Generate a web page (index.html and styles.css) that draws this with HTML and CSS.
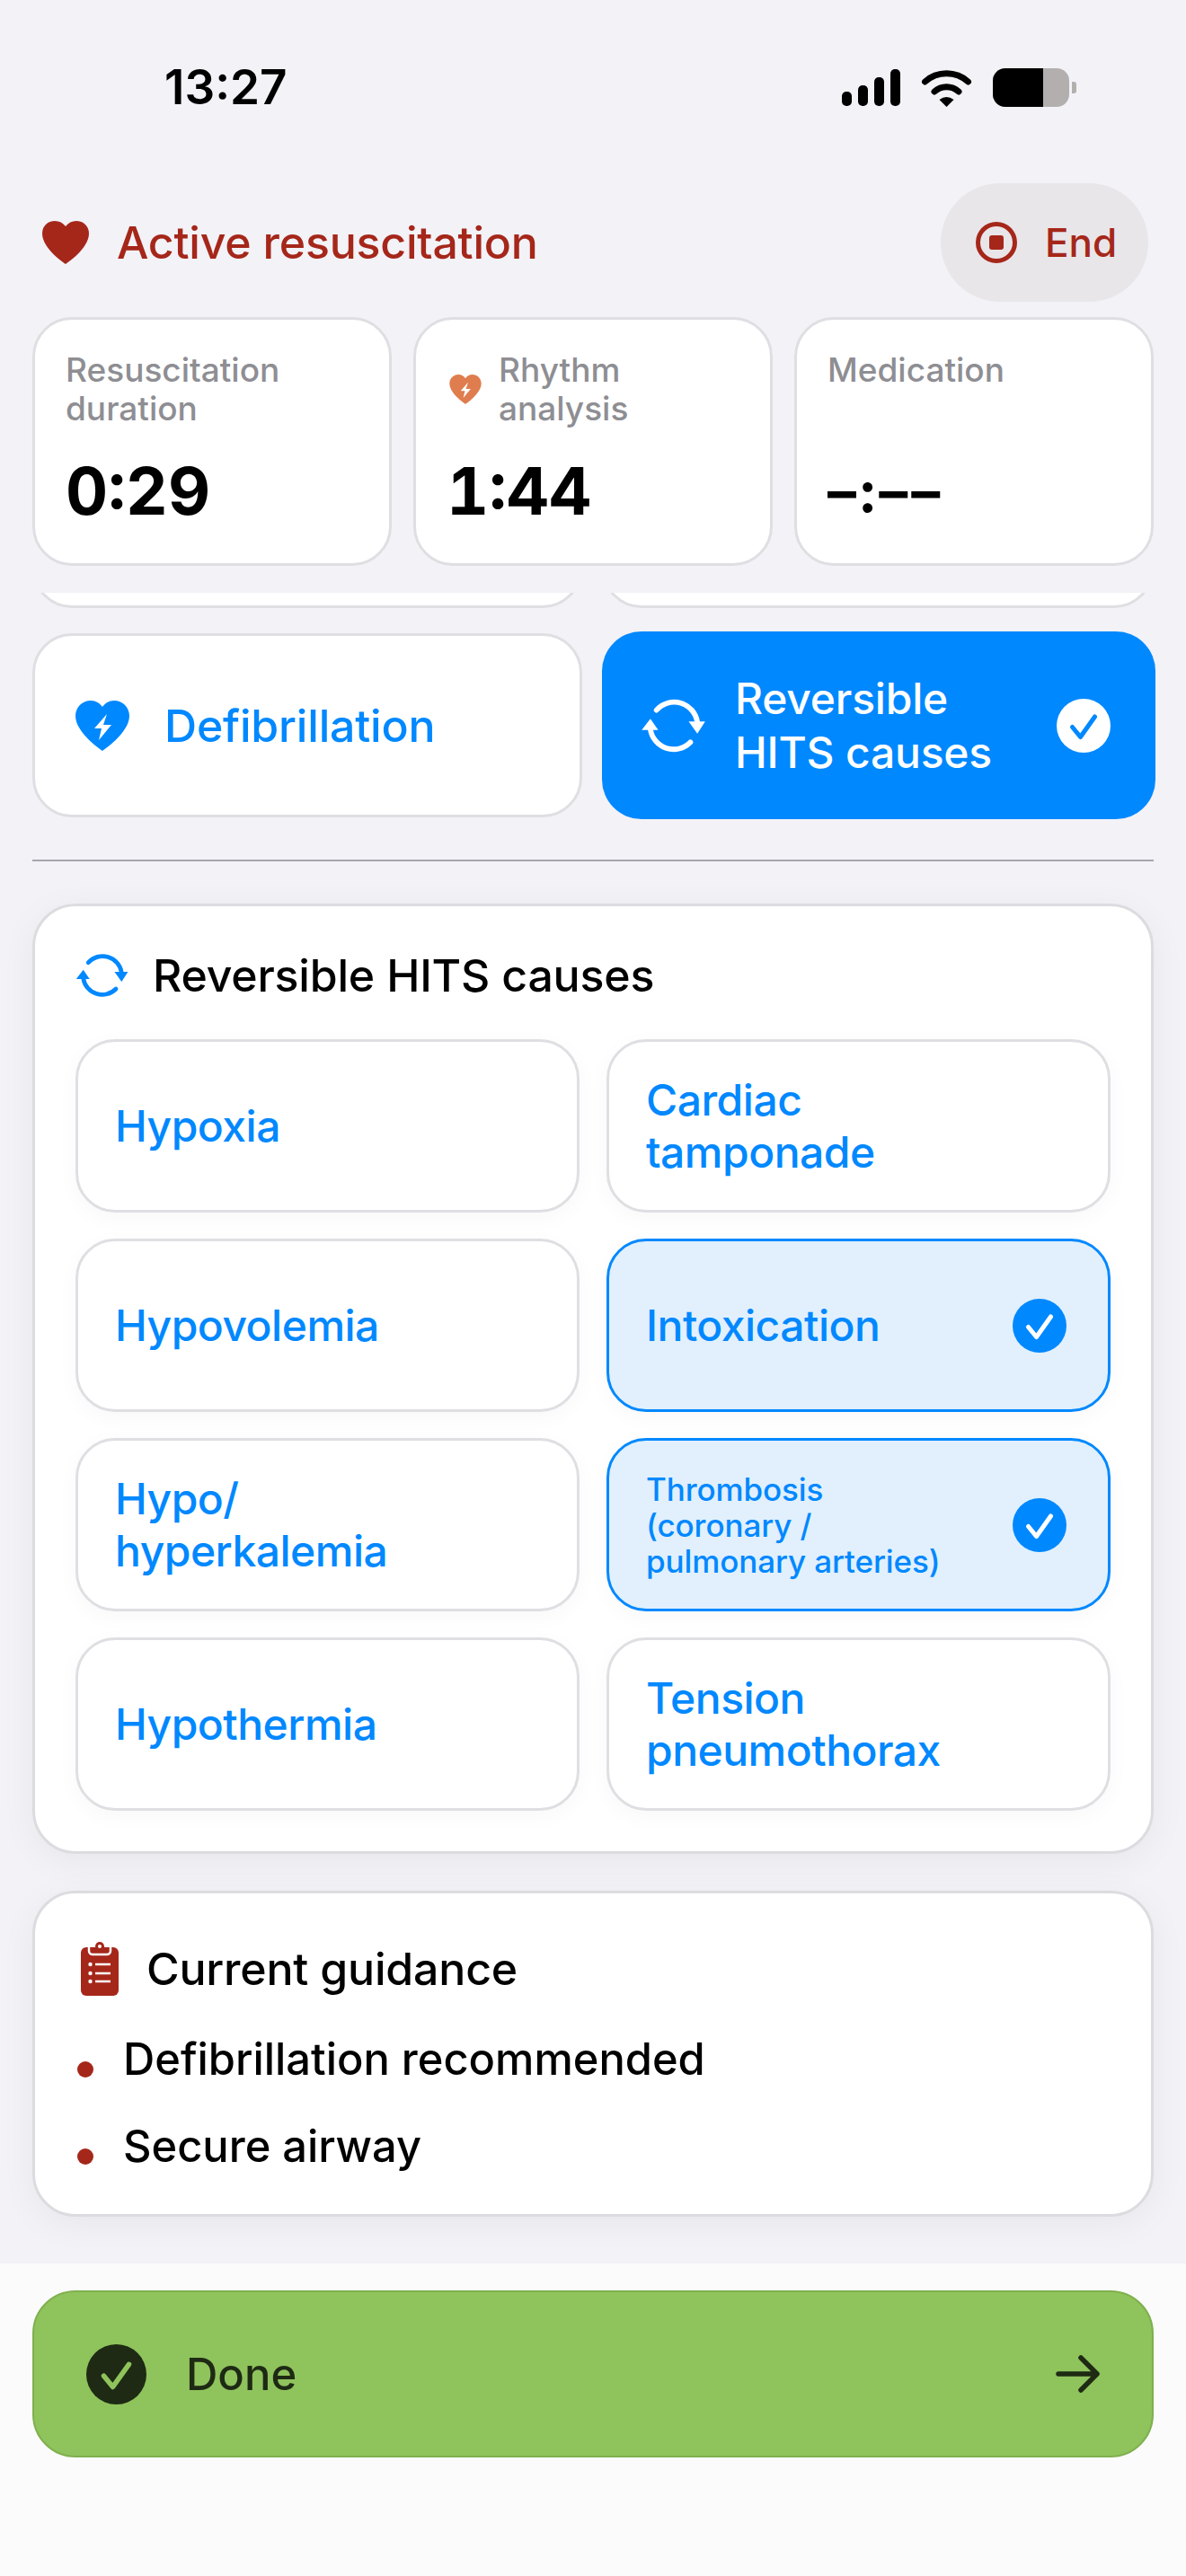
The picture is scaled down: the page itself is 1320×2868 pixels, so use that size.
FILE: index.html
```html
<!DOCTYPE html>
<html lang="en">
<head>
  <meta charset="UTF-8">
  <meta name="viewport" content="width=device-width, initial-scale=1.0">
  <title>Active resuscitation</title>
  <link rel="stylesheet" href="styles.css">
</head>
<body>
  <svg class="sprites" width="0" height="0">
    <symbol id="heart-bolt" viewBox="0 0 60 56">
      <path fill="currentColor" d="M30 56C30 56 0 36 0 17C0 7 8 0 17 0C23 0 27 3 30 7C33 3 37 0 43 0C52 0 60 7 60 17C60 36 30 56 30 56Z"/>
      <path fill="#fff" d="M35 15L21 31H29L26 44L40 27H31Z"/>
    </symbol>
    <symbol id="sync" viewBox="22 37 76 62">
      <path fill="none" stroke="currentColor" stroke-width="6" stroke-linecap="round" d="M40 50A27 27 0 0 1 87 64"/>
      <path fill="none" stroke="currentColor" stroke-width="6" stroke-linecap="round" d="M79 87A27 27 0 0 1 33 72"/>
      <path fill="currentColor" d="M77 63H96L87 77Z"/>
      <path fill="currentColor" d="M23 73H42L33 60Z"/>
    </symbol>
    <symbol id="check" viewBox="0 0 24 24">
      <path fill="none" stroke="currentColor" stroke-width="2" stroke-linecap="round" stroke-linejoin="round" d="M7 12.6L10.6 17L17 8"/>
    </symbol>
  </svg>

  <div class="status-bar">
    <span class="time">13:27</span>
    <div class="status-icons">
      <svg class="signal" width="65" height="41" viewBox="0 0 65 41">
        <rect x="0" y="25" width="11" height="16" rx="5"/>
        <rect x="18" y="18" width="11" height="23" rx="5"/>
        <rect x="36" y="9" width="11" height="32" rx="5"/>
        <rect x="54" y="0" width="11" height="41" rx="5"/>
      </svg>
      <svg class="wifi" width="57" height="43" viewBox="0 0 56 43">
        <path fill="none" stroke="#000" stroke-width="7" stroke-linecap="round" d="M4 15A36 36 0 0 1 52 15"/>
        <path fill="none" stroke="#000" stroke-width="7" stroke-linecap="round" d="M14.500 26A20 20 0 0 1 41.500 26"/>
        <path d="M28 43L20 35Q28 29 36 35Z"/>
      </svg>
      <div class="battery">
        <div class="battery-body"><span class="battery-fill"></span></div>
        <span class="battery-nub"></span>
      </div>
    </div>
  </div>

  <header class="top-header">
    <div class="top-title">
      <svg class="title-heart" viewBox="0 0 52 48"><path d="M26 48C26 48 0 31 0 14C0 6 6 0 14 0C19 0 23 2 26 6C29 2 33 0 38 0C46 0 52 6 52 14C52 31 26 48 26 48Z"/></svg>
      <span>Active resuscitation</span>
    </div>
    <button class="end-btn">
      <svg width="46" height="46" viewBox="0 0 46 46">
        <circle cx="23" cy="23" r="20.500" fill="none" stroke="#a5271a" stroke-width="5"/>
        <rect x="15" y="15" width="16" height="16" rx="3" fill="#a5271a"/>
      </svg>
      End
    </button>
  </header>

  <section class="stats">
    <div class="stat-card">
      <div class="stat-label"><span>Resuscitation<br>duration</span></div>
      <div class="stat-value">0:29</div>
    </div>
    <div class="stat-card">
      <div class="stat-label">
        <svg class="stat-icon"><use href="#heart-bolt"/></svg>
        <span>Rhythm<br>analysis</span>
      </div>
      <div class="stat-value">1:44</div>
    </div>
    <div class="stat-card">
      <div class="stat-label"><span>Medication</span></div>
      <div class="stat-value empty">–:––</div>
    </div>
  </section>

  <main class="scroll">
    <div class="scroll-inner">
      <div class="action-row">
        <div class="action-btn"></div>
        <div class="action-btn"></div>
      </div>
      <div class="action-row">
        <button class="action-btn">
          <svg class="defib-icon"><use href="#heart-bolt"/></svg>
          <span>Defibrillation</span>
        </button>
        <button class="action-btn selected">
          <svg class="sync-big"><use href="#sync"/></svg>
          <span>Reversible<br>HITS causes</span>
          <span class="check-white"><svg width="60" height="60"><use href="#check"/></svg></span>
        </button>
      </div>

      <hr class="divider">

      <section class="panel causes">
        <h2 class="panel-title">
          <svg class="sync-small"><use href="#sync"/></svg>
          Reversible HITS causes
        </h2>
        <div class="option-grid">
          <button class="option">Hypoxia</button>
          <button class="option">Cardiac<br>tamponade</button>
          <button class="option">Hypovolemia</button>
          <button class="option on">Intoxication
            <span class="check-blue"><svg width="60" height="60"><use href="#check"/></svg></span>
          </button>
          <button class="option">Hypo/<br>hyperkalemia</button>
          <button class="option on small">Thrombosis<br>(coronary /<br>pulmonary arteries)
            <span class="check-blue"><svg width="60" height="60"><use href="#check"/></svg></span>
          </button>
          <button class="option">Hypothermia</button>
          <button class="option">Tension<br>pneumothorax</button>
        </div>
      </section>

      <section class="panel guidance">
        <h2 class="panel-title">
          <svg class="clipboard" width="42" height="60" viewBox="0 0 42 60">
            <rect x="0" y="6" width="42" height="54" rx="6" fill="#a5271a"/>
            <path d="M9 6V10A4 4 0 0 0 13 14H29A4 4 0 0 0 33 10V6" fill="#a5271a" stroke="#fff" stroke-width="2.500"/>
            <circle cx="21" cy="5" r="5" fill="#a5271a"/>
            <circle cx="21" cy="5" r="2" fill="#fff"/>
            <circle cx="10.500" cy="25" r="2.200" fill="#fff"/>
            <circle cx="10.500" cy="35" r="2.200" fill="#fff"/>
            <circle cx="10.500" cy="44" r="2.200" fill="#fff"/>
            <path d="M16 25H33M16 35H33M16 44H33" stroke="#fff" stroke-width="2.600"/>
          </svg>
          Current guidance
        </h2>
        <ul class="guidance-list">
          <li>Defibrillation recommended</li>
          <li>Secure airway</li>
        </ul>
      </section>
    </div>
  </main>

  <footer class="bottom-bar">
    <button class="done-btn">
      <span class="done-check"><svg width="67" height="67"><use href="#check"/></svg></span>
      <span class="done-text">Done</span>
      <svg class="done-arrow" width="49" height="42" viewBox="0 0 49 42">
        <path fill="none" stroke="#1e2a14" stroke-width="5.500" stroke-linecap="round" stroke-linejoin="round" d="M3 21H46M28 3L46 21L28 39"/>
      </svg>
    </button>
  </footer>
</body>
</html>
```

FILE: styles.css
```css
* {
  box-sizing: border-box;
}
body {
  margin: 0;
  width: 1320px;
  height: 2868px;
  display: flex;
  flex-direction: column;
  overflow: hidden;
  background: #f2f2f7;
  color: #000;
  font-family: Inter, "Liberation Sans", sans-serif;
}
button {
  font-family: inherit;
  cursor: pointer;
}
.sprites {
  position: absolute;
}

/* status bar */
.status-bar {
  height: 194px;
  margin-bottom: 10px;
  padding: 0 122px 0 183px;
  display: flex;
  justify-content: space-between;
  align-items: center;
  flex-shrink: 0;
}
.time {
  font-size: 53px;
  font-weight: 600;
}
.status-icons {
  display: flex;
  align-items: center;
  gap: 23px;
}
.battery {
  display: flex;
  align-items: center;
  gap: 3px;
}
.battery-body {
  width: 85px;
  height: 43px;
  border-radius: 14px;
  background: #b4afaf;
  overflow: hidden;
}
.battery-fill {
  display: block;
  width: 56px;
  height: 100%;
  background: #000;
}
.battery-nub {
  width: 5px;
  height: 13px;
  border-radius: 0 3px 3px 0;
  background: #b4afaf;
}

/* header */
.top-header {
  height: 132px;
  padding: 0 42px 0 47px;
  display: flex;
  justify-content: space-between;
  align-items: center;
  flex-shrink: 0;
}
.top-title {
  display: flex;
  align-items: center;
  gap: 31px;
  color: #a5271a;
  font-size: 50px;
  font-weight: 520;
  letter-spacing: -0.2px;
}
.title-heart {
  width: 52px;
  height: 48px;
  fill: #a5271a;
}
.end-btn {
  width: 231px;
  height: 132px;
  padding: 0 0 0 39px;
  display: flex;
  align-items: center;
  gap: 31px;
  border: none;
  border-radius: 66px;
  background: #e9e6ea;
  color: #a5271a;
  font-size: 44px;
  font-weight: 520;
}

/* stat cards */
.stats {
  margin-top: 17px;
  padding: 0 36px;
  display: grid;
  grid-template-columns: repeat(3, 400px);
  gap: 24px;
  flex-shrink: 0;
}
.stat-card {
  height: 277px;
  padding: 34px 20px 40px 34px;
  display: flex;
  flex-direction: column;
  background: #fff;
  border: 3px solid #dfdfe3;
  border-radius: 44px;
}
.stat-label {
  display: flex;
  align-items: center;
  gap: 19px;
  color: #8e8e93;
  font-size: 37px;
  font-weight: 500;
  line-height: 43px;
}
.stat-icon {
  width: 36px;
  height: 33px;
  margin-left: 3px;
  color: #df7d4e;
}
.stat-value {
  margin-top: auto;
  font-size: 73px;
  font-weight: 700;
  line-height: 80px;
  font-variant-numeric: tabular-nums;
}
.stat-value.empty {
  font-size: 64px;
  letter-spacing: 4px;
}

/* scrolled content */
.scroll {
  margin-top: 30px;
  flex: 1;
  min-height: 0;
  overflow: hidden;
}
.scroll-inner {
  margin-top: -188px;
  padding: 0 36px;
}
.action-row {
  margin-bottom: 28px;
  display: grid;
  grid-template-columns: 612px 614px;
  gap: 22px;
}
.action-btn {
  height: 205px;
  padding: 0 45px;
  display: flex;
  align-items: center;
  background: #fff;
  border: 3px solid #dfdfe3;
  border-radius: 44px;
  color: #0088ff;
  font-size: 50px;
  font-weight: 520;
  letter-spacing: -0.2px;
  line-height: 60px;
  text-align: left;
}
.action-btn.selected {
  height: 209px;
  margin: -2px -2px -2px 0;
  padding: 0 50px 0 43px;
  background: #0088ff;
  border: none;
  color: #fff;
  font-size: 48px;
  letter-spacing: -0.2px;
}
.defib-icon {
  width: 60px;
  height: 56px;
  margin-right: 39px;
  color: #0088ff;
}
.sync-big {
  width: 74px;
  height: 60px;
  margin-right: 31px;
}
.check-white {
  width: 60px;
  height: 60px;
  margin-left: auto;
  border-radius: 50%;
  background: #fff;
  color: #0088ff;
}
.divider {
  height: 2px;
  margin: 47px 0;
  border: none;
  background: #a6a6ad;
}

/* panels */
.panel {
  background: #fff;
  border: 3px solid #dcdce0;
  border-radius: 48px;
  box-shadow: 0 8px 40px rgba(0, 0, 0, 0.05);
}
.panel-title {
  margin: 0;
  display: flex;
  align-items: center;
  font-size: 50px;
  font-weight: 520;
  letter-spacing: -0.2px;
  line-height: 60px;
}
.causes {
  padding: 47px 45px 45px;
}
.causes .panel-title {
  margin-bottom: 41px;
  gap: 26px;
}
.sync-small {
  width: 60px;
  height: 50px;
  color: #0088ff;
}
.option-grid {
  display: grid;
  grid-template-columns: 561px 561px;
  grid-auto-rows: 193px;
  column-gap: 30px;
  row-gap: 29px;
}
.option {
  padding: 0 46px 0 41px;
  display: flex;
  align-items: center;
  justify-content: space-between;
  background: #fff;
  border: 3px solid #dfdfe3;
  border-radius: 44px;
  box-shadow: 0 6px 24px rgba(0, 0, 0, 0.03);
  color: #0088ff;
  font-size: 48px;
  font-weight: 520;
  letter-spacing: -0.5px;
  line-height: 58px;
  text-align: left;
}
.option.on {
  background: #e1f0fc;
  border-color: #0088ff;
}
.option.small {
  display: grid;
  grid-template-columns: 1fr 60px;
  align-items: center;
  font-size: 35px;
  letter-spacing: -0.1px;
  line-height: 40px;
}
.option.small .check-blue {
  grid-row: 1;
  grid-column: 2;
}
.check-blue {
  width: 60px;
  height: 60px;
  border-radius: 50%;
  background: #0088ff;
  color: #fff;
}
.guidance {
  height: 363px;
  margin-top: 41px;
  padding: 54px 45px 0 47px;
}
.guidance .panel-title {
  gap: 31px;
}
.clipboard {
  margin-left: 4px;
}
.guidance-list {
  margin: 41px 0 0;
  padding: 0;
  display: flex;
  flex-direction: column;
  gap: 37px;
  list-style: none;
  font-size: 48.800px;
  font-weight: 450;
  line-height: 60px;
}
.guidance-list li {
  display: flex;
  gap: 33px;
}
.guidance-list li::before {
  content: "";
  width: 18px;
  height: 18px;
  margin-top: 32px;
  border-radius: 50%;
  background: #a5271a;
}

/* bottom bar */
.bottom-bar {
  height: 348px;
  padding-top: 30px;
  padding-left: 36px;
  padding-right: 36px;
  background: #fbfbfb;
  flex-shrink: 0;
}
.done-btn {
  width: 100%;
  height: 186px;
  padding: 0 58px;
  display: flex;
  align-items: center;
  background: #8fc35c;
  border: 2px solid #7fb04f;
  border-radius: 48px;
  color: #1e2a14;
  font-size: 49px;
  font-weight: 520;
}
.done-check {
  width: 67px;
  height: 67px;
  margin-right: 44px;
  border-radius: 50%;
  background: #1e2a14;
  color: #8fc35c;
}
.done-arrow {
  margin-left: auto;
}
```
